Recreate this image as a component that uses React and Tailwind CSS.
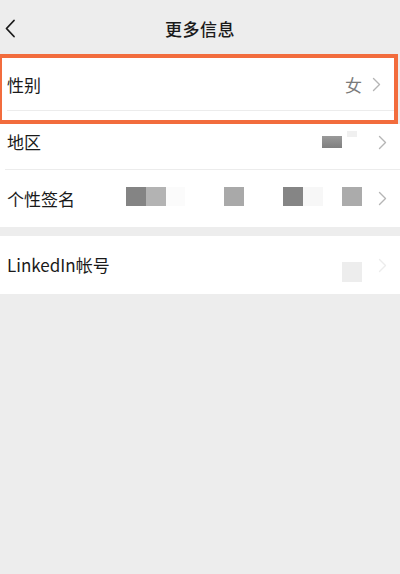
import React from 'react';

const Chevron = ({ className = 'text-[#b5b5b5]' }) => (
  <svg width="9" height="15" viewBox="0 0 9 15" className={className} fill="none">
    <path d="M1.5 1.5 L7.5 7.5 L1.5 13.5" stroke="currentColor" strokeWidth="1.4" strokeLinecap="round" strokeLinejoin="round" />
  </svg>
);

const Row = ({ label, children, className = '', divider }) => (
  <div className={`relative bg-white flex items-center pr-[13px] ${className}`}>
    <span className="text-[17px] text-[#1a1a1a]">{label}</span>
    <div className="ml-auto flex items-center">{children}</div>
    {divider && <div className="absolute left-[5px] right-0 bottom-0 h-px bg-[#ececec]" />}
  </div>
);

const Block = ({ c }) => <div className={`w-[20px] h-[19px] ${c}`} />;

const App = () => {
  return (
    <div
      className="w-[400px] h-[574px] bg-[#ededed] overflow-hidden"
      style={{ fontFamily: '"Noto Sans CJK SC", "Noto Sans", sans-serif' }}
    >
      <header className="relative h-[54px] flex items-center justify-center pt-[4px]">
        <svg width="12" height="19" viewBox="0 0 12 19" className="absolute left-[4px] top-[19px]" fill="none">
          <path d="M10 1.5 L2.5 9.5 L10 17.5" stroke="#1a1a1a" strokeWidth="1.8" strokeLinecap="round" strokeLinejoin="round" />
        </svg>
        <h1 className="text-[17px] font-medium text-[#1a1a1a] tracking-[0.5px]">更多信息</h1>
      </header>

      <div className="border-[4px] border-l-[2px] border-[#f26c3d] w-[398px] bg-white pb-[9px]">
        <Row label="性别" className="h-[53px] pl-[5px]" divider>
          <span className="text-[17px] text-[#7a7a7a] mr-[10px]">女</span>
          <Chevron />
        </Row>
      </div>

      <Row label="地区" className="h-[46px] pl-[7px] pb-[10px]" divider>
        <div className="w-[20px] h-[12px] bg-gradient-to-b from-[#9a9a9a] to-[#7f7f7f] mr-[5px]" />
        <div className="w-[10px] h-[6px] bg-[#f0f0f0] mr-[21px] self-start mt-[-4px]" />
        <Chevron />
      </Row>

      <Row label="个性签名" className="h-[57px] pl-[7px]">
        <div className="flex items-center mr-[16px] mt-[-4px]">
          <Block c="bg-[#848484]" />
          <Block c="bg-[#b3b3b3]" />
          <div className="w-[19px] h-[19px] bg-[#fbfbfb]" />
          <div className="w-[39px]" />
          <Block c="bg-[#a9a9a9]" />
          <div className="w-[39px]" />
          <Block c="bg-[#858585]" />
          <div className="w-[20px] h-[19px] bg-[#f7f7f7]" />
          <div className="w-[19px]" />
          <Block c="bg-[#ababab]" />
        </div>
        <Chevron />
      </Row>

      <div className="h-[9px]" />

      <Row label="LinkedIn帐号" className="h-[58px] pl-[7px]">
        <div className="w-[20px] h-[20px] bg-[#ededed] mr-[16px] mt-[14px]" />
        <Chevron className="text-[#ececec]" />
      </Row>
    </div>
  );
};

export default App;
